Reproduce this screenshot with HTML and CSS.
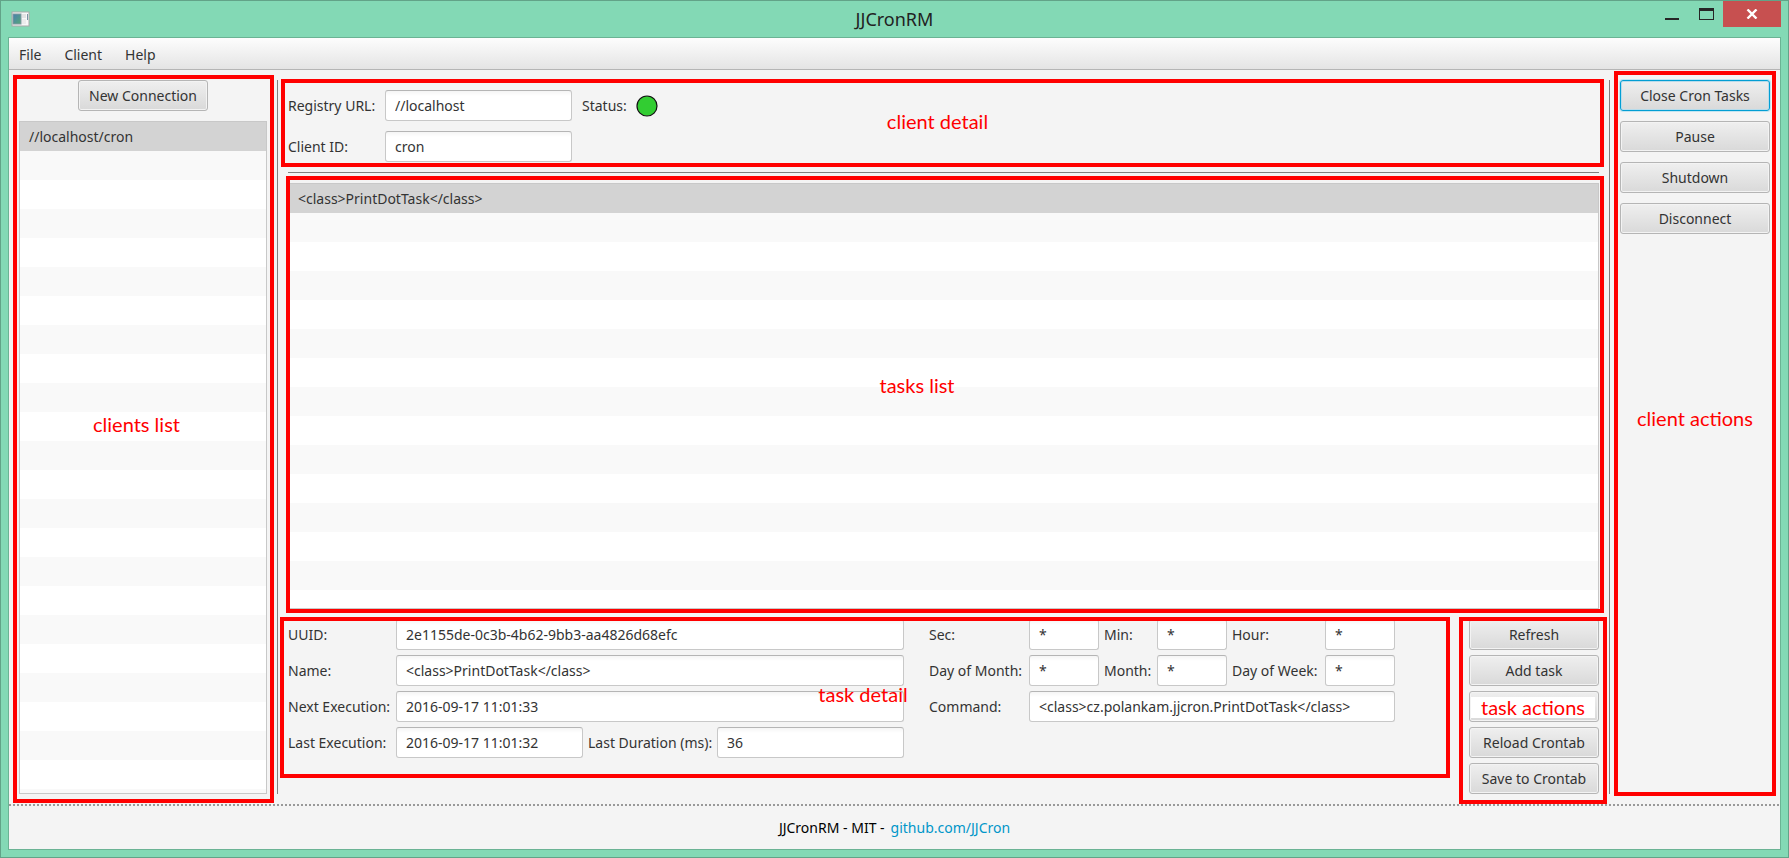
FILE: index.html
```html
<!DOCTYPE html>
<html lang="en">
<head>
<meta charset="utf-8">
<title>JJCronRM</title>
<link rel="stylesheet" href="styles.css">
</head>
<body>
<div class="window">
  <header class="titlebar">
    <svg class="app-icon" width="20" height="16" viewBox="0 0 20 16" aria-hidden="true">
      <defs>
        <linearGradient id="screen" x1="0" y1="0" x2="1" y2="1">
          <stop offset="0" stop-color="#4a7fb0"/>
          <stop offset="1" stop-color="#55a878"/>
        </linearGradient>
      </defs>
      <rect x="1" y="1" width="17" height="14" fill="#f8f8f8" stroke="#a9a9a9"/>
      <rect x="2" y="3" width="8" height="10" fill="url(#screen)" stroke="#8298a0"/>
      <rect x="11" y="3" width="4" height="4" fill="#e4e4e4"/>
      <rect x="11" y="8" width="4" height="5" fill="#ececec"/>
      <rect x="16" y="3" width="1" height="6" fill="#7b93a5"/>
    </svg>
    <h1 class="title">JJCronRM</h1>
    <div class="window-controls">
      <button class="window-button" type="button" aria-label="Minimize">
        <svg width="14" height="20" viewBox="0 0 14 20"><rect y="17" width="14" height="2" fill="#262626"/></svg>
      </button>
      <button class="window-button" type="button" aria-label="Maximize">
        <svg width="15" height="20" viewBox="0 0 15 20"><rect x="0.5" y="7.5" width="14" height="11" fill="none" stroke="#262626"/><rect y="7" width="15" height="3" fill="#262626"/></svg>
      </button>
      <button class="window-button window-close" type="button" aria-label="Close">
        <svg width="12" height="10" viewBox="0 0 12 10"><path d="M1.500 0.500L10.500 9.500M10.500 0.500L1.500 9.500" stroke="#fff" stroke-width="2.400"/></svg>
      </button>
    </div>
  </header>

  <div class="content">
    <nav class="menubar">
      <button class="menu" type="button">File</button>
      <button class="menu" type="button">Client</button>
      <button class="menu" type="button">Help</button>
    </nav>

    <main class="main">
      <section class="clients">
        <button class="button button-fixed" type="button">New Connection</button>
        <ul class="list">
          <li class="row">//localhost/cron</li>
        </ul>
        <div class="note note-clients"><span class="note-text">clients list</span></div>
      </section>

      <div class="divider"></div>

      <div class="center">
        <section class="client-detail">
          <label for="url">Registry URL:</label>
          <input class="field" id="url" type="text" value="//localhost">
          <span>Status:</span>
          <svg width="22" height="22" viewBox="0 0 22 22" aria-hidden="true"><circle cx="11" cy="11" r="10" fill="#32cd32" stroke="#111" stroke-width="1.200"/></svg>
          <label for="client-id">Client ID:</label>
          <input class="field" id="client-id" type="text" value="cron">
          <div class="note note-client-detail"><span class="note-text">client detail</span></div>
        </section>

        <div class="divider-line"></div>

        <section class="tasks">
          <ul class="list">
            <li class="row">&lt;class&gt;PrintDotTask&lt;/class&gt;</li>
          </ul>
          <div class="note note-tasks"><span class="note-text">tasks list</span></div>
        </section>

        <div class="bottom">
          <section class="task-detail">
            <div class="task-info">
              <label for="uuid">UUID:</label>
              <input class="field wide" id="uuid" type="text" value="2e1155de-0c3b-4b62-9bb3-aa4826d68efc">
              <label for="name">Name:</label>
              <input class="field wide" id="name" type="text" value="&lt;class&gt;PrintDotTask&lt;/class&gt;">
              <label for="next">Next Execution:</label>
              <input class="field wide" id="next" type="text" value="2016-09-17 11:01:33">
              <label for="last">Last Execution:</label>
              <input class="field" id="last" type="text" value="2016-09-17 11:01:32">
              <label for="duration">Last Duration (ms):</label>
              <input class="field" id="duration" type="text" value="36">
            </div>
            <div class="task-schedule">
              <label for="sec">Sec:</label>
              <input class="field" id="sec" type="text" value="*">
              <label for="min">Min:</label>
              <input class="field" id="min" type="text" value="*">
              <label for="hour">Hour:</label>
              <input class="field" id="hour" type="text" value="*">
              <label for="dom">Day of Month:</label>
              <input class="field" id="dom" type="text" value="*">
              <label for="month">Month:</label>
              <input class="field" id="month" type="text" value="*">
              <label for="dow">Day of Week:</label>
              <input class="field" id="dow" type="text" value="*">
              <label for="command">Command:</label>
              <input class="field wide" id="command" type="text" value="&lt;class&gt;cz.polankam.jjcron.PrintDotTask&lt;/class&gt;">
            </div>
            <div class="note note-task-detail"><span class="note-text">task detail</span></div>
          </section>

          <section class="task-actions">
            <button class="button" type="button">Refresh</button>
            <button class="button" type="button">Add task</button>
            <button class="button" type="button" aria-labelledby="task-actions-text"></button>
            <button class="button" type="button">Reload Crontab</button>
            <button class="button" type="button">Save to Crontab</button>
            <div class="note note-task-actions"><span class="note-text note-text-filled" id="task-actions-text">task actions</span></div>
          </section>
        </div>
      </div>

      <div class="divider"></div>

      <section class="client-actions">
        <button class="button button-focused" type="button">Close Cron Tasks</button>
        <button class="button" type="button">Pause</button>
        <button class="button" type="button">Shutdown</button>
        <button class="button" type="button">Disconnect</button>
        <div class="note note-client-actions"><span class="note-text">client actions</span></div>
      </section>
    </main>

    <footer class="footer">
      <span>JJCronRM - MIT -</span>
      <a class="link" href="https://github.com/JJCron">github.com/JJCron</a>
    </footer>
  </div>
</div>
</body>
</html>
```

FILE: styles.css
```css
* {
  box-sizing: border-box;
}

body {
  margin: 0;
  font-family: "Noto Sans", "Open Sans", sans-serif;
  font-size: 14px;
  line-height: 20px;
  color: #333;
}

button,
input {
  font: inherit;
  color: inherit;
}

.window {
  display: flex;
  flex-direction: column;
  min-height: 100vh;
  padding: 0 7px 7px;
  background: #83d9b5;
  border: 1px solid #62a388;
}

/* Title bar */
.titlebar {
  display: grid;
  grid-template-columns: 1fr auto 1fr;
  height: 36px;
}

.app-icon {
  margin: 10px 0 0 3px;
}

.title {
  margin: 6px 0 0;
  font-size: 18px;
  font-weight: 400;
  line-height: 24px;
  color: #222;
}

.window-controls {
  display: flex;
  justify-content: flex-end;
  align-items: flex-start;
}

.window-button {
  display: flex;
  justify-content: center;
  width: 34px;
  height: 26px;
  padding: 0;
  background: none;
  border: 0;
}

.window-close {
  align-items: center;
  width: 58px;
  background: #c75050;
}

/* Window content */
.content {
  flex: 1;
  display: flex;
  flex-direction: column;
  background: #f4f4f4;
  border: 1px solid #6bb394;
}

.menubar {
  display: flex;
  height: 32px;
  background: linear-gradient(#fdfdfd, #e4e4e4);
  border-bottom: 1px solid #b5b5b5;
}

.menu {
  padding: 2px 13px 0 10px;
  background: none;
  border: 0;
}

.main {
  flex: 1;
  display: grid;
  grid-template-columns: 248px 1px minmax(0, 1fr) 1px 150px;
  gap: 10px;
  padding: 10px;
}

.divider {
  background: #808080;
}

.divider-line {
  height: 1px;
  background: #808080;
}

.button {
  height: 31px;
  padding: 0 8px;
  background: linear-gradient(#efefef, #d9d9d9);
  border: 1px solid #b5b5b5;
  border-radius: 3px;
  box-shadow: inset 0 0 0 1px #f3f3f3;
}

.button-fixed {
  width: 130px;
}

.button-focused {
  border-color: #039ed3;
  box-shadow: 0 0 0 1px #c3e5f1, inset 0 0 0 1px #b9dceb;
}

.field {
  width: 100%;
  min-width: 0;
  height: 31px;
  padding: 0 9px;
  background: linear-gradient(#f5f5f5, #fff 5px);
  border: 1px solid #c8c8c8;
  border-top-color: #b5b5b5;
  border-radius: 3px;
}

.list {
  flex: 1;
  margin: 0;
  padding: 0;
  list-style: none;
  background: repeating-linear-gradient(#fff 0 29px, #f9f9f9 29px 58px);
  border: 1px solid #c8c8c8;
}

.row {
  height: 29px;
  padding: 0 9px;
  line-height: 29px;
  background: #d3d3d3;
}

.clients,
.tasks,
.client-actions,
.task-actions {
  position: relative;
  display: flex;
  flex-direction: column;
}

.clients {
  align-items: center;
  gap: 10px;
}

.clients .list {
  width: 100%;
}

.client-actions {
  gap: 10px;
}

.center {
  display: flex;
  flex-direction: column;
  gap: 10px;
}

.client-detail {
  position: relative;
  display: grid;
  grid-template-columns: 87px 187px 44px 1fr;
  align-items: center;
  gap: 10px;
  padding-top: 10px;
  white-space: nowrap;
}

.client-detail [for="client-id"] {
  grid-column: 1;
}

.tasks {
  flex: 1;
}

.bottom {
  display: flex;
  gap: 10px;
}

.task-detail {
  position: relative;
  flex: 1;
  display: flex;
  align-items: flex-start;
  gap: 25px;
  white-space: nowrap;
}

.task-info,
.task-schedule {
  display: grid;
  align-items: center;
  gap: 5px;
}

.task-info {
  grid-template-columns: 103px 187px 124px 187px;
}

.task-schedule {
  grid-template-columns: 95px 70px 48px 70px 88px 70px;
}

.wide {
  grid-column: 2 / -1;
}

.task-actions {
  gap: 5px;
  width: 130px;
}

/* Outlined notes that name each part of the window */
.note {
  position: absolute;
  display: flex;
  justify-content: center;
  align-items: center;
  border: 4px solid #f00;
  pointer-events: none;
}

.note-text {
  font-family: Lato, "Open Sans", sans-serif;
  font-size: 20px;
  line-height: 21px;
  color: #f00;
  white-space: nowrap;
}

.note-text-filled {
  padding: 0 10px;
  background: #fff;
}

.note-clients {
  inset: -5px -7px -9px -6px;
  padding: 0 14px 30px 0;
}

.note-client-detail {
  inset: -1px -5px -5px -7px;
  padding: 0 10px 4px 0;
}

.note-tasks {
  inset: -7px -5px -4px -2px;
  padding: 0 56px 18px 0;
}

.note-task-detail {
  inset: -2px 9px 16px -8px;
  padding: 0 4px 6px 0;
}

.note-task-actions {
  inset: -2px -8px -10px -10px;
  padding-bottom: 6px;
}

.note-client-actions {
  inset: -9px -6px -2px -6px;
  padding-bottom: 30px;
}

/* Footer */
.footer {
  display: flex;
  justify-content: center;
  align-items: center;
  gap: 6px;
  height: 45px;
  padding-top: 2px;
  color: #000;
  background: repeating-linear-gradient(90deg, #999 0 2px, #f4f4f4 2px 4px) top / 100% 2px no-repeat;
}

.link {
  color: #0096c9;
  text-decoration: none;
}
```
